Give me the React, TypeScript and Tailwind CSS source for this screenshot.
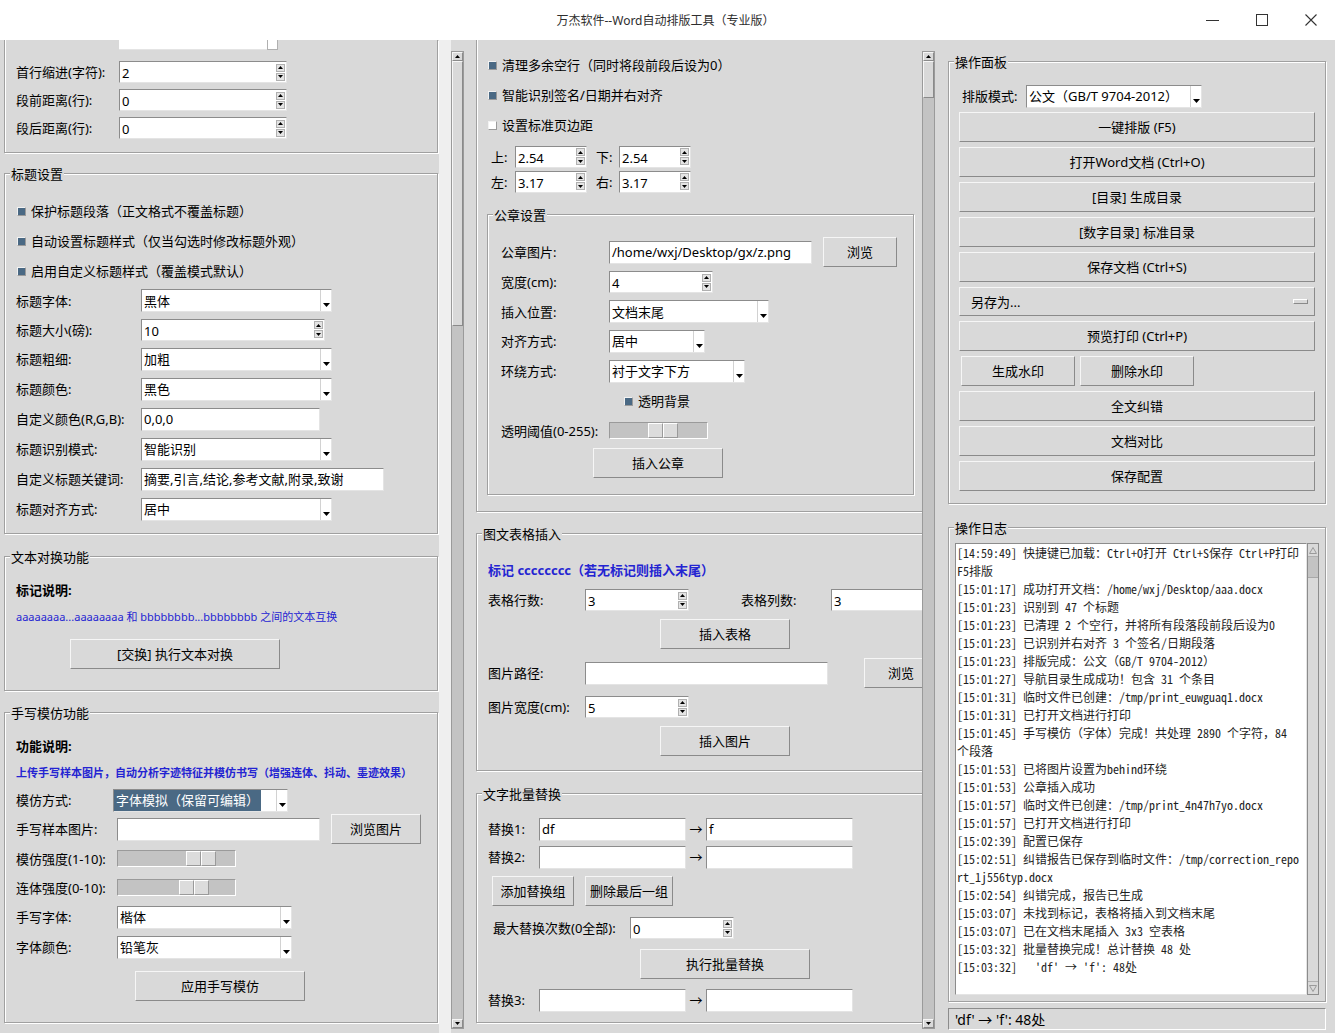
import React from "react";

type Kids = { children?: React.ReactNode };

const sunken =
  "border border-t-[#8c8c8c] border-l-[#8c8c8c] border-r-[#e4e4e4] border-b-[#e4e4e4]";
const raised =
  "border border-t-[#f6f6f6] border-l-[#f6f6f6] border-r-[#8a8a8a] border-b-[#8a8a8a]";
const groove = "border border-[#a0a0a0] shadow-[inset_1px_1px_0_#fff,1px_1px_0_#fff]";

function Tri({ up = false }: { up?: boolean }) {
  return (
    <svg width="5" height="3" viewBox="0 0 5 3" className="block">
      <path d={up ? "M0 3 L2.5 0 L5 3Z" : "M0 0 L2.5 3 L5 0Z"} fill="#000" />
    </svg>
  );
}

function Frame({ title, className = "", children }: Kids & { title?: string; className?: string }) {
  return (
    <div className={`relative shrink-0 flex flex-col ${groove} ${className}`}>
      {title && (
        <span className="absolute -top-[12px] left-[5px] bg-[#d9d9d9] px-[1px] pt-[2px] leading-[20px] whitespace-nowrap">
          {title}
        </span>
      )}
      {children}
    </div>
  );
}

function Row({ className = "", label, lw = "", children }: Kids & { className?: string; label?: string; lw?: string }) {
  return (
    <div className={`flex items-center shrink-0 ${className}`}>
      {label !== undefined && <span className={`whitespace-nowrap shrink-0 pt-[2px] ${lw}`}>{label}</span>}
      {children}
    </div>
  );
}

function Entry({ w, v = "" }: { w: string; v?: string }) {
  return (
    <div className={`h-[23px] bg-white ${sunken} pl-[2px] pt-[2px] flex items-center whitespace-nowrap overflow-hidden shrink-0 ${w}`}>
      {v}
    </div>
  );
}

function Spin({ w, v }: { w: string; v: string }) {
  return (
    <div className={`h-[22px] bg-white ${sunken} flex items-center shrink-0 ${w}`}>
      <span className="flex-1 pl-[2px] pt-[2px] leading-[20px] whitespace-nowrap overflow-hidden">{v}</span>
      <span className="flex flex-col gap-[1px] pr-[1px]">
        <span className="w-[9px] h-[8px] flex items-center justify-center bg-[#e4e4e4] border border-[#b0b0b0]">
          <Tri up />
        </span>
        <span className="w-[9px] h-[8px] flex items-center justify-center bg-[#e4e4e4] border border-[#b0b0b0]">
          <Tri />
        </span>
      </span>
    </div>
  );
}

function Combo({ w, v, sel = false }: { w: string; v: string; sel?: boolean }) {
  return (
    <div className={`h-[23px] bg-white ${sunken} flex shrink-0 ${w}`}>
      <span className="flex-1 min-w-0 flex items-stretch whitespace-nowrap overflow-hidden">
        <span className={`flex items-center pt-[2px] ${sel ? "bg-[#4a6984] text-white px-[2px]" : "pl-[2px]"}`}>{v}</span>
      </span>
      <span className="w-[11px] border-l border-[#d2d2d2] flex items-end justify-center pb-[3px]">
        <svg width="7" height="5" viewBox="0 0 7 5" className="block">
          <path d="M0 0 L3.5 4 L7 0Z" fill="#000" />
        </svg>
      </span>
    </div>
  );
}

function Btn({ className = "", children }: Kids & { className?: string }) {
  return (
    <div className={`h-[30px] shrink-0 flex items-center justify-center pt-[2px] bg-[#d9d9d9] whitespace-nowrap ${raised} ${className}`}>
      {children}
    </div>
  );
}

function Check({ on, label, className = "" }: { on: boolean; label: string; className?: string }) {
  return (
    <div className={`flex items-center shrink-0 ${className}`}>
      <span
        className={`w-[9px] h-[9px] border border-t-[#f2f2f2] border-l-[#f2f2f2] border-r-[#9a9a9a] border-b-[#9a9a9a] ${
          on ? "bg-[#4a6984]" : "bg-white"
        }`}
      />
      <span className="ml-[5px] pt-[2px] whitespace-nowrap">{label}</span>
    </div>
  );
}

function Scale({ w, at }: { w: string; at: string }) {
  return (
    <div className={`h-[17px] bg-[#c3c3c3] border border-t-[#9a9a9a] border-l-[#9a9a9a] border-r-white border-b-white flex shrink-0 ${w}`}>
      <span className={`flex ${at}`}>
        <span className="w-[15px] h-[15px] bg-[#dcdcdc] border border-t-white border-l-white border-r-[#9a9a9a] border-b-[#9a9a9a]" />
        <span className="w-[15px] h-[15px] bg-[#dcdcdc] border border-t-white border-l-white border-r-[#9a9a9a] border-b-[#9a9a9a]" />
      </span>
    </div>
  );
}

function VScroll({ thumb }: { thumb: string }) {
  return (
    <div className="w-[13px] h-[978px] mt-[11px] shrink-0 flex flex-col bg-[#c3c3c3] border border-[#9a9a9a]">
      <span className={`h-[9px] flex items-center justify-center bg-[#d9d9d9] ${raised}`}>
        <Tri up />
      </span>
      <span className={`bg-[#d9d9d9] ${raised} ${thumb}`} />
      <span className="flex-1" />
      <span className={`h-[9px] flex items-center justify-center bg-[#d9d9d9] ${raised}`}>
        <Tri />
      </span>
    </div>
  );
}

function LeftPane() {
  return (
    <div className="w-[439px] h-full overflow-hidden pl-[4px] flex flex-col shrink-0">
      <div className="w-[434px] h-[113px] shrink-0 border border-t-0 border-[#a0a0a0] shadow-[inset_1px_0_0_#fff,1px_1px_0_#fff] flex flex-col">
        <div className="flex ml-[114px]">
          <div className="w-[148px] h-[10px] bg-white border-b border-[#e4e4e4]" />
          <div className="w-[11px] h-[10px] bg-white border-l border-b border-r border-[#b0b0b0]" />
        </div>
        <Row className="h-[28px] mt-[8px] pl-[11px]" label="首行缩进(字符):" lw="w-[103px]">
          <Spin w="w-[168px]" v="2" />
        </Row>
        <Row className="h-[28px] pl-[11px]" label="段前距离(行):" lw="w-[103px]">
          <Spin w="w-[168px]" v="0" />
        </Row>
        <Row className="h-[28px] pl-[11px]" label="段后距离(行):" lw="w-[103px]">
          <Spin w="w-[168px]" v="0" />
        </Row>
      </div>

      <Frame title="标题设置" className="w-[434px] h-[361px] mt-[20px] pt-[22px]">
        <Check on className="h-[30px] pl-[12px]" label="保护标题段落（正文格式不覆盖标题）" />
        <Check on className="h-[30px] pl-[12px]" label="自动设置标题样式（仅当勾选时修改标题外观）" />
        <Check on className="h-[30px] pl-[12px]" label="启用自定义标题样式（覆盖模式默认）" />
        <Row className="h-[29px] pl-[11px]" label="标题字体:" lw="w-[125px]">
          <Combo w="w-[191px]" v="黑体" />
        </Row>
        <Row className="h-[29px] pl-[11px]" label="标题大小(磅):" lw="w-[125px]">
          <Spin w="w-[184px]" v="10" />
        </Row>
        <Row className="h-[30px] pl-[11px]" label="标题粗细:" lw="w-[125px]">
          <Combo w="w-[191px]" v="加粗" />
        </Row>
        <Row className="h-[30px] pl-[11px]" label="标题颜色:" lw="w-[125px]">
          <Combo w="w-[191px]" v="黑色" />
        </Row>
        <Row className="h-[30px] pl-[11px]" label="自定义颜色(R,G,B):" lw="w-[125px]">
          <Entry w="w-[179px]" v="0,0,0" />
        </Row>
        <Row className="h-[30px] pl-[11px]" label="标题识别模式:" lw="w-[125px]">
          <Combo w="w-[191px]" v="智能识别" />
        </Row>
        <Row className="h-[30px] pl-[11px]" label="自定义标题关键词:" lw="w-[125px]">
          <Entry w="w-[243px]" v="摘要,引言,结论,参考文献,附录,致谢" />
        </Row>
        <Row className="h-[30px] pl-[11px]" label="标题对齐方式:" lw="w-[125px]">
          <Combo w="w-[191px]" v="居中" />
        </Row>
      </Frame>

      <Frame title="文本对换功能" className="w-[434px] h-[135px] mt-[22px] pt-[23px]">
        <Row className="h-[20px] pl-[11px] pt-[2px] font-bold">标记说明:</Row>
        <Row className="h-[20px] mt-[6px] pl-[11px] pt-[2px] text-[11px] text-[#2424d2]">
          aaaaaaaa...aaaaaaaa 和 bbbbbbbb...bbbbbbbb 之间的文本互换
        </Row>
        <Btn className="mt-[13px] ml-[65px] w-[210px]">[交换] 执行文本对换</Btn>
      </Frame>

      <Frame title="手写模仿功能" className="w-[434px] h-[311px] mt-[21px] pt-[23px]">
        <Row className="h-[20px] pl-[11px] pt-[2px] font-bold">功能说明:</Row>
        <Row className="h-[20px] mt-[6px] pl-[11px] pt-[2px] text-[11px] font-semibold text-[#2424d2]">
          上传手写样本图片，自动分析字迹特征并模仿书写（增强连体、抖动、墨迹效果）
        </Row>
        <Row className="h-[28px] mt-[4px] pl-[11px]" label="模仿方式:" lw="w-[97px]">
          <Combo w="w-[175px]" v="字体模拟（保留可编辑）" sel />
        </Row>
        <Row className="h-[30px] pl-[11px]" label="手写样本图片:" lw="w-[101px]">
          <Entry w="w-[203px]" />
          <Btn className="ml-[11px] w-[90px] h-[29px]">浏览图片</Btn>
        </Row>
        <Row className="h-[29px] pl-[11px]" label="模仿强度(1-10):" lw="w-[101px]">
          <Scale w="w-[119px]" at="ml-[68px]" />
        </Row>
        <Row className="h-[29px] pl-[11px]" label="连体强度(0-10):" lw="w-[101px]">
          <Scale w="w-[119px]" at="ml-[61px]" />
        </Row>
        <Row className="h-[30px] pl-[11px]" label="手写字体:" lw="w-[101px]">
          <Combo w="w-[175px]" v="楷体" />
        </Row>
        <Row className="h-[30px] pl-[11px]" label="字体颜色:" lw="w-[101px]">
          <Combo w="w-[175px]" v="铅笔灰" />
        </Row>
        <Btn className="mt-[9px] ml-[130px] w-[170px]">应用手写模仿</Btn>
      </Frame>
    </div>
  );
}

function MiddlePane() {
  return (
    <div className="w-[446px] h-full overflow-hidden flex flex-col shrink-0">
      <div className="w-[460px] h-[472px] shrink-0 border border-t-0 border-[#a0a0a0] shadow-[inset_1px_0_0_#fff,1px_1px_0_#fff] flex flex-col pt-[10px]">
        <Check on className="h-[30px] pl-[11px]" label="清理多余空行（同时将段前段后设为0）" />
        <Check on className="h-[30px] pl-[11px]" label="智能识别签名/日期并右对齐" />
        <Check on={false} className="h-[30px] pl-[11px]" label="设置标准页边距" />
        <Row className="h-[25px] mt-[4px] pl-[14px]" label="上:" lw="w-[24px]">
          <Spin w="w-[72px]" v="2.54" />
          <span className="ml-[9px] pt-[2px] w-[23px]">下:</span>
          <Spin w="w-[72px]" v="2.54" />
        </Row>
        <Row className="h-[25px] pl-[14px]" label="左:" lw="w-[24px]">
          <Spin w="w-[72px]" v="3.17" />
          <span className="ml-[9px] pt-[2px] w-[23px]">右:</span>
          <Spin w="w-[72px]" v="3.17" />
        </Row>

        <Frame title="公章设置" className="w-[427px] h-[281px] mt-[20px] ml-[10px] pt-[22px]">
          <Row className="h-[30px] pl-[13px]" label="公章图片:" lw="w-[108px]">
            <Entry w="w-[203px]" v="/home/wxj/Desktop/gx/z.png" />
            <Btn className="ml-[11px] w-[74px]">浏览</Btn>
          </Row>
          <Row className="h-[30px] pl-[13px]" label="宽度(cm):" lw="w-[108px]">
            <Spin w="w-[104px]" v="4" />
          </Row>
          <Row className="h-[29px] pl-[13px]" label="插入位置:" lw="w-[108px]">
            <Combo w="w-[160px]" v="文档末尾" />
          </Row>
          <Row className="h-[30px] pl-[13px]" label="对齐方式:" lw="w-[108px]">
            <Combo w="w-[96px]" v="居中" />
          </Row>
          <Row className="h-[30px] pl-[13px]" label="环绕方式:" lw="w-[108px]">
            <Combo w="w-[136px]" v="衬于文字下方" />
          </Row>
          <Check on className="h-[30px] pl-[136px]" label="透明背景" />
          <Row className="h-[29px] pl-[13px]" label="透明阈值(0-255):" lw="w-[108px]">
            <Scale w="w-[99px]" at="ml-[38px]" />
          </Row>
          <Btn className="mt-[3px] ml-[105px] w-[130px]">插入公章</Btn>
        </Frame>
      </div>

      <Frame title="图文表格插入" className="w-[460px] h-[238px] mt-[21px] pt-[26px]">
        <Row className="h-[20px] pl-[11px] pt-[2px] font-bold text-[#2424d2]">标记 cccccccc（若无标记则插入末尾）</Row>
        <Row className="h-[30px] mt-[5px] pl-[11px]" label="表格行数:" lw="w-[97px]">
          <Spin w="w-[104px]" v="3" />
          <span className="ml-[52px] pt-[2px] w-[108px]">表格列数:</span>
          <Spin w="w-[104px]" v="3" />
        </Row>
        <Btn className="mt-[4px] ml-[183px] w-[130px] h-[29px]">插入表格</Btn>
        <Row className="h-[30px] mt-[9px] pl-[11px]" label="图片路径:" lw="w-[97px]">
          <Entry w="w-[243px]" />
          <Btn className="ml-[36px] w-[74px]">浏览</Btn>
        </Row>
        <Row className="h-[30px] mt-[4px] pl-[11px]" label="图片宽度(cm):" lw="w-[97px]">
          <Spin w="w-[104px]" v="5" />
        </Row>
        <Btn className="mt-[4px] ml-[183px] w-[130px] h-[29px]">插入图片</Btn>
      </Frame>

      <Frame title="文字批量替换" className="w-[460px] h-[230px] mt-[22px] pt-[21px]">
        <Row className="h-[28px] pl-[11px]" label="替换1:" lw="w-[51px]">
          <Entry w="w-[147px]" v="df" />
          <span className="w-[20px] pt-[2px] text-center">→</span>
          <Entry w="w-[147px]" v="f" />
        </Row>
        <Row className="h-[28px] pl-[11px]" label="替换2:" lw="w-[51px]">
          <Entry w="w-[147px]" />
          <span className="w-[20px] pt-[2px] text-center">→</span>
          <Entry w="w-[147px]" />
        </Row>
        <Row className="h-[29px] mt-[5px] pl-[15px]">
          <Btn className="w-[82px] h-[29px]">添加替换组</Btn>
          <Btn className="ml-[11px] w-[88px] h-[29px]">删除最后一组</Btn>
        </Row>
        <Row className="h-[30px] mt-[8px] pl-[16px]" label="最大替换次数(0全部):" lw="w-[137px]">
          <Spin w="w-[104px]" v="0" />
        </Row>
        <Btn className="mt-[6px] ml-[163px] w-[170px] h-[29px]">执行批量替换</Btn>
        <Row className="h-[28px] mt-[7px] pl-[11px]" label="替换3:" lw="w-[51px]">
          <Entry w="w-[147px]" />
          <span className="w-[20px] pt-[2px] text-center">→</span>
          <Entry w="w-[147px]" />
        </Row>
      </Frame>
    </div>
  );
}

const logLines = [
  "[14:59:49] 快捷键已加载：Ctrl+O打开 Ctrl+S保存 Ctrl+P打印",
  "F5排版",
  "[15:01:17] 成功打开文档：/home/wxj/Desktop/aaa.docx",
  "[15:01:23] 识别到 47 个标题",
  "[15:01:23] 已清理 2 个空行，并将所有段落段前段后设为0",
  "[15:01:23] 已识别并右对齐 3 个签名/日期段落",
  "[15:01:23] 排版完成：公文（GB/T 9704-2012）",
  "[15:01:27] 导航目录生成成功！包含 31 个条目",
  "[15:01:31] 临时文件已创建：/tmp/print_euwguaq1.docx",
  "[15:01:31] 已打开文档进行打印",
  "[15:01:45] 手写模仿（字体）完成！共处理 2890 个字符，84",
  "个段落",
  "[15:01:53] 已将图片设置为behind环绕",
  "[15:01:53] 公章插入成功",
  "[15:01:57] 临时文件已创建：/tmp/print_4n47h7yo.docx",
  "[15:01:57] 已打开文档进行打印",
  "[15:02:39] 配置已保存",
  "[15:02:51] 纠错报告已保存到临时文件：/tmp/correction_repo",
  "rt_1j556typ.docx",
  "[15:02:54] 纠错完成，报告已生成",
  "[15:03:07] 未找到标记，表格将插入到文档末尾",
  "[15:03:07] 已在文档末尾插入 3x3 空表格",
  "[15:03:32] 批量替换完成！总计替换 48 处",
  "[15:03:32]   'df' → 'f': 48处",
];

function RightPane() {
  const full = "ml-[10px] w-[356px]";
  return (
    <div className="w-[378px] h-full flex flex-col shrink-0">
      <Frame title="操作面板" className="w-[378px] h-[443px] mt-[21px] pt-[22px]">
        <Row className="h-[24px] pl-[13px]" label="排版模式:" lw="w-[64px]">
          <Combo w="w-[176px]" v="公文（GB/T 9704-2012）" />
        </Row>
        <div className="flex flex-col gap-[5px] mt-[4px]">
          <Btn className={full}>一键排版 (F5)</Btn>
          <Btn className={full}>打开Word文档 (Ctrl+O)</Btn>
          <Btn className={full}>[目录] 生成目录</Btn>
          <Btn className={full}>[数字目录] 标准目录</Btn>
          <Btn className={full}>保存文档 (Ctrl+S)</Btn>
          {/* menubutton: text on the left, indicator bar on the right */}
          <div className={`${full} h-[29px] flex items-center bg-[#d9d9d9] ${raised} pl-[11px] pr-[6px]`}>
            <span className="flex-1 pt-[2px]">另存为...</span>
            <span className="w-[15px] h-[5px] bg-[#d9d9d9] border border-t-white border-l-white border-r-[#8a8a8a] border-b-[#8a8a8a]" />
          </div>
          <Btn className={full}>预览打印 (Ctrl+P)</Btn>
          <div className="flex gap-[5px] ml-[12px]">
            <Btn className="w-[114px]">生成水印</Btn>
            <Btn className="w-[114px]">删除水印</Btn>
          </div>
          <Btn className={full}>全文纠错</Btn>
          <Btn className={full}>文档对比</Btn>
          <Btn className={full}>保存配置</Btn>
        </div>
      </Frame>

      <Frame title="操作日志" className="w-[378px] h-[475px] mt-[23px] pt-[15px]">
        <div className="flex ml-[6px] h-[452px]">
          <div className="w-[352px] h-full bg-white border border-t-[#8c8c8c] border-l-[#8c8c8c] border-r-[#e4e4e4] border-b-[#e4e4e4] pl-[1px] overflow-hidden font-['Noto_Sans_Mono_CJK_SC','Noto_Sans_CJK_SC',monospace] text-[12px] leading-[18px] text-[#1e1e1e]">
            {logLines.map((l, i) => (
              <div key={i} className="whitespace-pre">
                {l}
              </div>
            ))}
          </div>
          <div className="w-[12px] h-full flex flex-col bg-[#d9d9d9] border border-[#8c8c8c]">
            <span className="h-[13px] flex items-center justify-center border-b border-[#b0b0b0]">
              <svg width="8" height="7" viewBox="0 0 8 7">
                <path d="M0.5 6.5 L4 0.5 L7.5 6.5Z" fill="none" stroke="#9a9a9a" />
              </svg>
            </span>
            <span className="h-[21px] bg-[#c3c3c3] border-b border-[#a8a8a8]" />
            <span className="flex-1" />
            <span className="h-[13px] flex items-center justify-center border-t border-[#b0b0b0]">
              <svg width="8" height="7" viewBox="0 0 8 7">
                <path d="M0.5 0.5 L4 6.5 L7.5 0.5Z" fill="none" stroke="#9a9a9a" />
              </svg>
            </span>
          </div>
        </div>
      </Frame>

      <div className={`w-[378px] h-[22px] mt-[6px] ${sunken} border-r-white border-b-white pl-[6px] flex items-center text-[14px]`}>
        'df' → 'f': 48处
      </div>
    </div>
  );
}

export default function App() {
  return (
    <div className="w-[1335px] h-[1033px] flex flex-col overflow-hidden font-['Noto_Sans','Noto_Sans_CJK_SC',sans-serif] text-[13px] text-black">
      <div className="h-[40px] shrink-0 bg-white flex items-center">
        <div className="w-[148px]" />
        <div className="flex-1 text-center pr-[4px] pt-[1px] text-[12px] text-[#2e2e2e]">万杰软件--Word自动排版工具（专业版）</div>
        <div className="w-[148px] flex items-center">
          <span className="w-[50px] flex justify-center">
            <svg width="13" height="13" viewBox="0 0 13 13">
              <path d="M0 6.5 H13" stroke="#333" strokeWidth="1" />
            </svg>
          </span>
          <span className="w-[50px] flex justify-center">
            <svg width="12" height="12" viewBox="0 0 12 12">
              <rect x="0.5" y="0.5" width="11" height="11" fill="none" stroke="#333" strokeWidth="1" />
            </svg>
          </span>
          <span className="w-[48px] flex justify-center">
            <svg width="12" height="12" viewBox="0 0 12 12">
              <path d="M0.5 0.5 L11.5 11.5 M11.5 0.5 L0.5 11.5" stroke="#333" strokeWidth="1.1" />
            </svg>
          </span>
        </div>
      </div>

      <div className="flex-1 flex bg-[#d9d9d9] min-h-0">
        <LeftPane />
        <div className="w-[12px] h-full bg-[#efefef] shrink-0" />
        <VScroll thumb="h-[265px]" />
        <div className="w-[12px] shrink-0" />
        <MiddlePane />
        <VScroll thumb="h-[37px]" />
        <div className="w-[13px] shrink-0" />
        <RightPane />
      </div>
    </div>
  );
}
